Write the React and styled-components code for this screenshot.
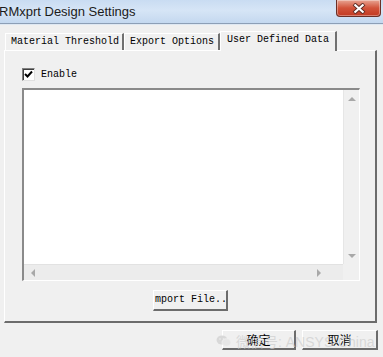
import styled, { createGlobalStyle } from "styled-components";

const GlobalStyle = createGlobalStyle`
  html, body {
    margin: 0;
    padding: 0;
    background: #f0f0f0;
    overflow: hidden;
  }
  #root {
    width: 383px;
    height: 357px;
  }
`;

const mono = `"Liberation Mono", "DejaVu Sans Mono", monospace`;

export default function App() {
  return (
    <Window>
      <GlobalStyle />
      <TitleBar>
        <Title>RMxprt Design Settings</Title>
        <CloseButton>
          <svg width="14" height="11" viewBox="0 0 14 11">
            <path d="M2 1 L12 10 M12 1 L2 10" stroke="#5a2a22" strokeWidth="4" />
            <path d="M2.5 1.5 L11.5 9.5 M11.5 1.5 L2.5 9.5" stroke="#fff" strokeWidth="2.2" />
          </svg>
        </CloseButton>
      </TitleBar>

      <Body>
        <TabRow>
          <Tab $width={119}>Material Threshold</Tab>
          <Tab $width={96}>Export Options</Tab>
          <Tab $width={117} $active>
            User Defined Data
          </Tab>
        </TabRow>

        <Panel>
          <CheckRow>
            <CheckBox>
              <svg width="9" height="9" viewBox="0 0 9 9">
                <path d="M1 4 L3.5 6.5 L8 1.5" stroke="#000" strokeWidth="2" fill="none" />
              </svg>
            </CheckBox>
            <Label>Enable</Label>
          </CheckRow>

          <ListBox>
            <ListArea>
              <Canvas />
              <VScroll>
                <Arrow $dir="up" />
                <Arrow $dir="down" />
              </VScroll>
            </ListArea>
            <HRow>
              <HScroll>
                <Arrow $dir="left" />
                <Arrow $dir="right" />
              </HScroll>
              <Corner />
            </HRow>
          </ListBox>

          <ButtonRow>
            <ImportButton>mport File..</ImportButton>
          </ButtonRow>
        </Panel>

        <Footer>
          <DialogButton $width={74}>确定</DialogButton>
          <DialogButton $width={76}>取消</DialogButton>
          <Watermark>
            <svg width="16" height="14" viewBox="0 0 16 14">
              <ellipse cx="6" cy="6" rx="5.5" ry="4.6" fill="#d8d8d8" />
              <ellipse cx="10.5" cy="8.5" rx="4.5" ry="3.8" fill="#e6e6e6" stroke="#f0f0f0" strokeWidth="0.8" />
              <circle cx="4" cy="5" r="0.8" fill="#f0f0f0" />
              <circle cx="7.5" cy="5" r="0.8" fill="#f0f0f0" />
            </svg>
            <span>微信号: ANSYS-China</span>
          </Watermark>
        </Footer>
      </Body>
    </Window>
  );
}

const Window = styled.div`
  width: 383px;
  height: 357px;
  background: #f0f0f0;
  display: flex;
  flex-direction: column;
  overflow: hidden;
`;

const TitleBar = styled.div`
  height: 23px;
  display: flex;
  align-items: flex-start;
  background: linear-gradient(180deg, #c9dcf2 0%, #d6e5f6 45%, #c4d8ef 100%);
  border-bottom: 1px solid #8d9fb6;
  box-shadow: 0 1px 0 #dfe8f2;
`;

const Title = styled.div`
  font-family: "Liberation Sans", Arial, sans-serif;
  font-size: 13px;
  line-height: 20px;
  color: #1b1b1b;
  margin-left: -1px;
  padding-top: 2px;
  flex: 1;
`;

const CloseButton = styled.div`
  width: 43px;
  height: 16px;
  margin-right: 2px;
  display: flex;
  align-items: center;
  justify-content: center;
  background: linear-gradient(180deg, #e8a593 0%, #d2533a 50%, #c23a22 100%);
  border: 1px solid #6b2f26;
  border-top: none;
  border-radius: 0 0 4px 4px;
  box-shadow: inset 0 0 0 1px rgba(255, 255, 255, 0.35);
`;

const Body = styled.div`
  position: relative;
  flex: 1;
  padding: 8px 6px 0 4px;
`;

const TabRow = styled.div`
  display: flex;
  align-items: flex-end;
  height: 18px;
  padding-left: 1px;
  position: relative;
  z-index: 1;
`;

const Tab = styled.div`
  width: ${(p) => p.$width}px;
  height: ${(p) => (p.$active ? 20 : 17)}px;
  box-sizing: border-box;
  margin-bottom: ${(p) => (p.$active ? -1 : 0)}px;
  background: #f0f0f0;
  border-top: 1px solid #ffffff;
  border-left: 1px solid #ffffff;
  border-right: 2px solid #707070;
  font-family: ${mono};
  font-size: 10px;
  line-height: 16px;
  padding-left: ${(p) => (p.$active ? 6 : 5)}px;
  color: #000;
  white-space: nowrap;
`;

const Panel = styled.div`
  height: 273px;
  box-sizing: border-box;
  border-top: 1px solid #ffffff;
  border-left: 1px solid #ffffff;
  border-right: 2px solid #6c6c6c;
  border-bottom: 2px solid #6c6c6c;
  padding: 17px 0 0 17px;
  display: flex;
  flex-direction: column;
`;

const CheckRow = styled.div`
  display: flex;
  align-items: center;
  gap: 6px;
  height: 13px;
`;

const CheckBox = styled.div`
  width: 13px;
  height: 13px;
  box-sizing: border-box;
  background: #fff;
  border-top: 1px solid #808080;
  border-left: 1px solid #808080;
  border-right: 1px solid #e0e0e0;
  border-bottom: 1px solid #e0e0e0;
  box-shadow: inset 1px 1px 0 #404040;
  display: flex;
  align-items: center;
  justify-content: center;
`;

const Label = styled.span`
  font-family: ${mono};
  font-size: 10px;
  color: #000;
`;

const ListBox = styled.div`
  margin-top: 7px;
  width: 338px;
  height: 193px;
  box-sizing: border-box;
  border-top: 2px solid #8a8a8a;
  border-left: 2px solid #8a8a8a;
  border-right: 1px solid #ffffff;
  border-bottom: 1px solid #ffffff;
  background: #fff;
  display: flex;
  flex-direction: column;
`;

const ListArea = styled.div`
  flex: 1;
  display: flex;
`;

const Canvas = styled.div`
  flex: 1;
  background: #fff;
`;

const VScroll = styled.div`
  width: 15px;
  background: #f0f0f0;
  border-left: 1px solid #e6e6e6;
  display: flex;
  flex-direction: column;
  justify-content: space-between;
  align-items: center;
  padding: 7px 0 6px;
`;

const HRow = styled.div`
  height: 16px;
  display: flex;
`;

const HScroll = styled.div`
  flex: 1;
  background: #ececec;
  border-top: 1px solid #e2e2e2;
  display: flex;
  justify-content: space-between;
  align-items: center;
  padding: 0 22px 0 7px;
`;

const Corner = styled.div`
  width: 16px;
  background: #f0f0f0;
`;

const arrowBorders = {
  up: "border-left: 4px solid transparent; border-right: 4px solid transparent; border-bottom: 4px solid #a8a8a8;",
  down: "border-left: 4px solid transparent; border-right: 4px solid transparent; border-top: 4px solid #a8a8a8;",
  left: "border-top: 4px solid transparent; border-bottom: 4px solid transparent; border-right: 4px solid #a8a8a8;",
  right: "border-top: 4px solid transparent; border-bottom: 4px solid transparent; border-left: 4px solid #a8a8a8;",
};

const Arrow = styled.div`
  width: 0;
  height: 0;
  ${(p) => arrowBorders[p.$dir]}
`;

const ButtonRow = styled.div`
  display: flex;
  padding-left: 131px;
  margin-top: 9px;
`;

const ImportButton = styled.div`
  width: 75px;
  height: 21px;
  box-sizing: border-box;
  background: #f0f0f0;
  border-top: 1px solid #ffffff;
  border-left: 1px solid #ffffff;
  border-right: 2px solid #6c6c6c;
  border-bottom: 2px solid #6c6c6c;
  font-family: ${mono};
  font-size: 10px;
  line-height: 18px;
  padding-left: 1px;
  color: #000;
  white-space: nowrap;
  overflow: hidden;
`;

const Footer = styled.div`
  display: flex;
  justify-content: flex-end;
  gap: 6px;
  margin-top: 7px;
  margin-right: -1px;
  position: relative;
`;

const DialogButton = styled.div`
  width: ${(p) => p.$width}px;
  height: 20px;
  box-sizing: border-box;
  background: #f0f0f0;
  border-top: 1px solid #ffffff;
  border-left: 1px solid #ffffff;
  border-right: 2px solid #6c6c6c;
  border-bottom: 2px solid #6c6c6c;
  font-family: "Noto Sans CJK SC", sans-serif;
  font-size: 12px;
  line-height: 17px;
  text-align: center;
  color: #000;
`;

const Watermark = styled.div`
  position: absolute;
  left: 212px;
  top: 1px;
  display: flex;
  align-items: center;
  gap: 4px;
  font-family: "Liberation Sans", "Noto Sans CJK SC", sans-serif;
  font-size: 14px;
  color: rgba(205, 205, 205, 0.7);
  white-space: nowrap;
  pointer-events: none;
`;
